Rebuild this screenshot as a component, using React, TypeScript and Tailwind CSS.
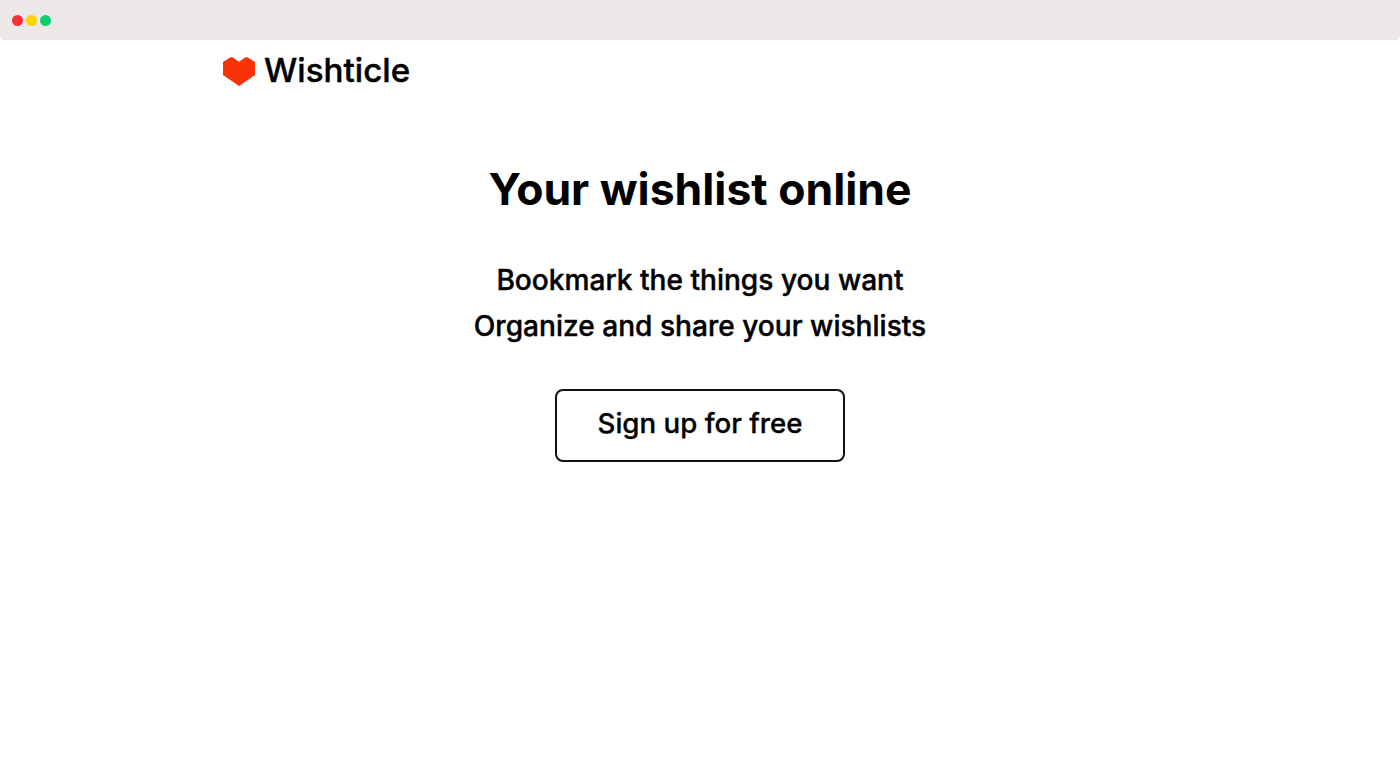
const App = () => {
  return (
    <div className="min-h-[780px] bg-white text-black font-['Inter',sans-serif]">
      <div className="h-10 bg-[#ece8e8] rounded-b-[4px] flex items-center gap-[3px] pl-3">
        <span className="w-[11px] h-[11px] rounded-full bg-[#f9303a]" />
        <span className="w-[11px] h-[11px] rounded-full bg-[#fdd400]" />
        <span className="w-[11px] h-[11px] rounded-full bg-[#0ccf70]" />
      </div>

      <header className="flex items-center gap-[9px] pl-[223px] h-[61px]">
        <svg width="32" height="29" viewBox="0 0 32 29" className="shrink-0 mt-[2px]">
          <path d="M0 5 L7.5 0.2 L9.5 0.2 L16 4.8 L22.5 0.2 L24.5 0.2 L32 5 L32 18 L16 29 L0 18 Z" fill="#f93208" />
        </svg>
        <span className="text-[33.2px] font-medium leading-none [-webkit-text-stroke:0.4px_black]">Wishticle</span>
      </header>

      <main className="flex flex-col items-center">
        <h1 className="mt-[60px] text-[44.5px] leading-[56px] font-bold">Your wishlist online</h1>
        <p className="mt-[40px] text-[28.1px] leading-[46px] font-medium [-webkit-text-stroke:0.4px_black]">Bookmark the things you want</p>
        <p className="text-[28.1px] leading-[46px] font-medium [-webkit-text-stroke:0.4px_black]">Organize and share your wishlists</p>
        <button className="mt-[40px] w-[290px] h-[73px] border-2 border-[#111] rounded-[8px] text-[27.7px] font-medium pb-[4px] [-webkit-text-stroke:0.3px_black]">
          Sign up for free
        </button>
      </main>
    </div>
  );
};

export default App;
